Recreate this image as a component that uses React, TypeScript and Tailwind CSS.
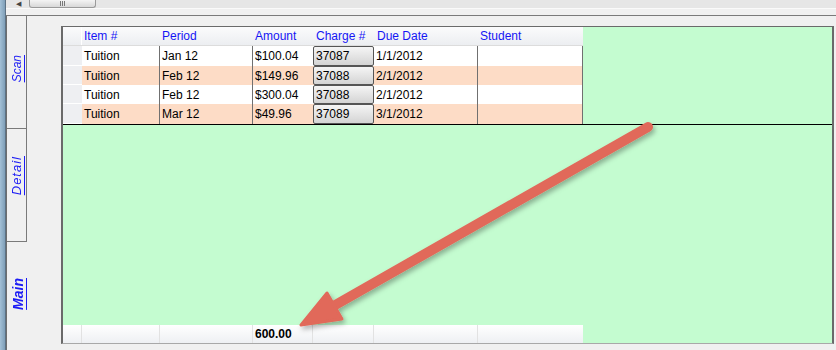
import React from 'react'

const rows = [
  { item: 'Tuition', period: 'Jan 12', amount: '$100.04', charge: '37087', due: '1/1/2012', peach: false, h: 'h-[20px]' },
  { item: 'Tuition', period: 'Feb 12', amount: '$149.96', charge: '37088', due: '2/1/2012', peach: true, h: 'h-[19px]' },
  { item: 'Tuition', period: 'Feb 12', amount: '$300.04', charge: '37088', due: '2/1/2012', peach: false, h: 'h-[19px]' },
  { item: 'Tuition', period: 'Mar 12', amount: '$49.96', charge: '37089', due: '3/1/2012', peach: true, h: 'h-[20px]' },
]

const TopBar = () => (
  <div className="h-[16px] border-b border-[#7a7a7a] flex flex-col">
    <div className="h-[9px] bg-[#e6e6e6] border-b border-[#fafafa] flex">
      <div className="w-[23px] flex items-start pl-[10px] text-[7px] leading-[7px] text-[#444]">◀</div>
      <div className="w-[67px] h-[8px] rounded-b-[3px] border border-t-0 border-[#9a9a9a] bg-linear-to-b from-[#f4f4f4] to-[#d8d8d8] flex items-start justify-center gap-[1px] pt-[1px]">
        <div className="w-px h-[5px] bg-[#777]" />
        <div className="w-px h-[5px] bg-[#777]" />
        <div className="w-px h-[5px] bg-[#777]" />
      </div>
    </div>
  </div>
)

const TabLabel = ({ text, cls }: { text: string; cls: string }) => (
  <span className={`[writing-mode:vertical-rl] rotate-180 italic underline leading-[12px] text-[#1c1cf5] ${cls}`}>
    {text}
  </span>
)

const Tabs = () => (
  <div className="w-[21px] flex flex-col border-l border-[#6e6e6e]">
    <div className="h-[113px] border-r border-b border-[#7a7a7a] rounded-tl-[4px] flex flex-col items-center pt-[39px]">
      <TabLabel text="Scan" cls="text-[12px]" />
    </div>
    <div className="h-[113px] border-r border-b border-[#7a7a7a] flex flex-col items-center pt-[27px]">
      <TabLabel text="Detail" cls="text-[13px] tracking-[1px]" />
    </div>
    <div className="flex-1 flex flex-col items-center pt-[36px] pl-[1px]">
      <TabLabel text="Main" cls="text-[14px] font-bold" />
    </div>
  </div>
)

const Grid = () => (
  <div className="w-[520px] flex flex-col">
    <div className="h-[19px] flex items-center bg-linear-to-b from-[#fbfbfc] to-[#eceef1] border-b border-[#dcdcdc] text-[#1515f5]">
      <div className="w-[19px] h-full border-r border-white" />
      <div className="w-[78px] pl-[2px]">Item #</div>
      <div className="w-[93px] pl-[2px]">Period</div>
      <div className="w-[60px] pl-[2px]">Amount</div>
      <div className="w-[61px] pl-[3px]">Charge #</div>
      <div className="w-[104px] pl-[3px]">Due Date</div>
      <div className="w-[105px] pl-[2px]">Student</div>
    </div>
    {rows.map((r, i) => (
      <div key={i} className={`${r.h} flex items-stretch ${r.peach ? 'bg-[#fddcc6]' : 'bg-white'}`}>
        <div className="w-[19px] bg-[#eeeff2] border-b border-white" />
        <div className="w-[78px] pl-[2px] flex items-center border-r border-[#707070]">{r.item}</div>
        <div className="w-[93px] pl-[2px] flex items-center border-r border-[#707070]">{r.period}</div>
        <div className="w-[60px] pl-[2px] flex items-center">{r.amount}</div>
        <div className="w-[61px] pl-[2px] flex items-center border border-[#555] rounded-[2px] bg-linear-to-b from-[#f5f5f5] to-[#d4d4d4]">{r.charge}</div>
        <div className="w-[104px] pl-[2px] flex items-center border-r border-[#707070]">{r.due}</div>
        <div className="w-[105px] border-r border-[#707070]" />
      </div>
    ))}
  </div>
)

const Footer = () => (
  <div className="h-[18px] flex">
    <div className="w-[520px] flex items-center bg-linear-to-b from-white to-[#eef0f3]">
      <div className="w-[19px] h-full border-r border-[#e2e2e2]" />
      <div className="w-[78px] h-full border-r border-[#e2e2e2]" />
      <div className="w-[93px] h-full border-r border-[#e2e2e2]" />
      <div className="w-[60px] h-full pl-[2px] flex items-center font-bold border-r border-[#e2e2e2]">600.00</div>
      <div className="w-[61px] h-full border-r border-[#e2e2e2]" />
      <div className="w-[104px] h-full border-r border-[#e2e2e2]" />
      <div className="w-[105px] h-full" />
    </div>
  </div>
)

const Arrow = () => (
  <svg width="836" height="350" className="absolute left-0 top-0 pointer-events-none">
    <defs>
      <filter id="sh" x="-20%" y="-20%" width="140%" height="140%">
        <feDropShadow dx="2" dy="3" stdDeviation="2.5" floodColor="#000" floodOpacity="0.3" />
      </filter>
    </defs>
    <g filter="url(#sh)" fill="#e1695a" stroke="#e1695a">
      <line x1="648" y1="127" x2="330" y2="308" strokeWidth="10" strokeLinecap="round" />
      <polygon points="301,325 327,293 342,319" strokeWidth="3" strokeLinejoin="round" />
    </g>
  </svg>
)

export default function App() {
  return (
    <div className="w-[836px] h-[350px] flex bg-[#f0f0f0] relative overflow-hidden font-['Liberation_Sans',Arial,sans-serif] text-[12px] text-black">
      <div className="w-[6px] h-full bg-linear-to-r from-[#a3c0d6] to-[#7f9fb8] border-r border-[#5d7284]" />
      <div className="flex-1 flex flex-col">
        <TopBar />
        <div className="flex-1 flex">
          <Tabs />
          <div className="flex-1 flex pl-[34px] pt-[10px] pr-[2px] pb-[6px]">
            <div className="flex-1 flex flex-col bg-[#c4fcd0] border-t border-l-2 border-r-2 border-b border-t-[#6a6a6a] border-l-[#6a6a6a] border-r-[#6a6a6a] border-b-[#a8a8a8]">
              <div className="flex">
                <Grid />
              </div>
              <div className="h-px bg-black" />
              <div className="flex-1" />
              <Footer />
            </div>
          </div>
        </div>
      </div>
      <Arrow />
    </div>
  )
}
